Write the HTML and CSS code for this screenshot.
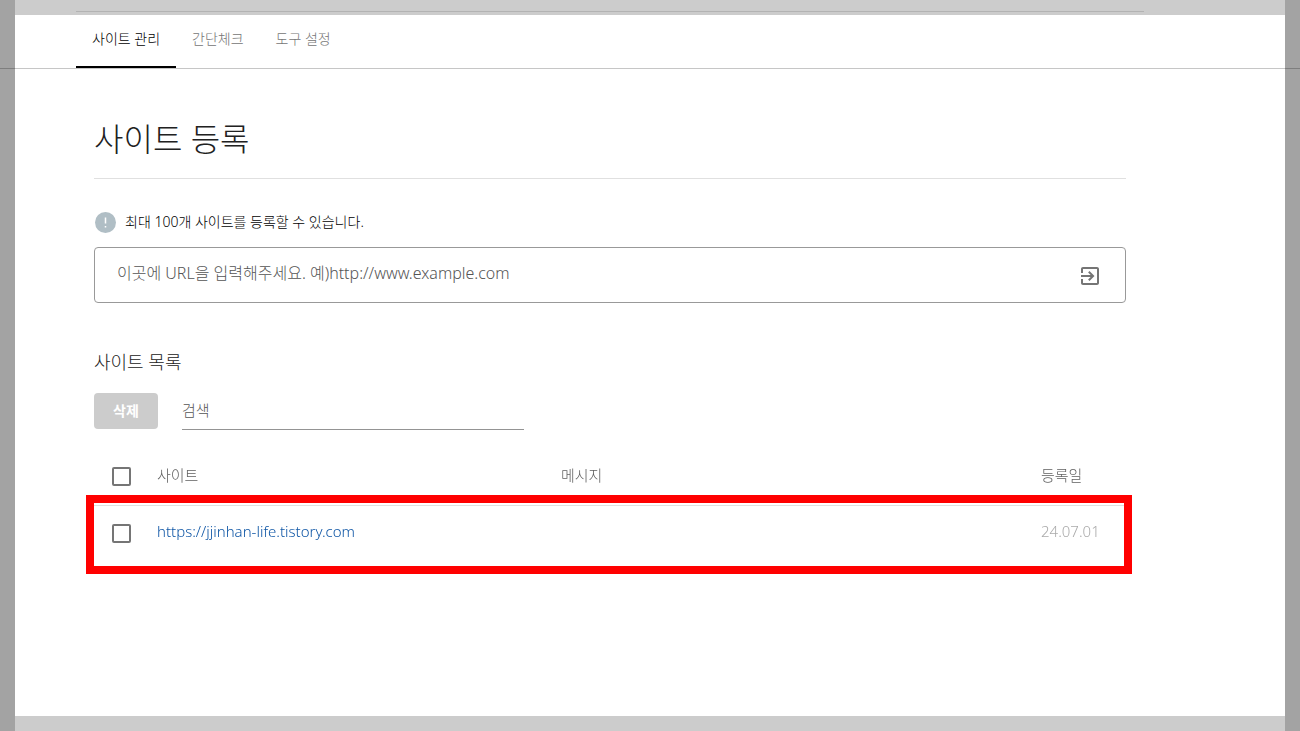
FILE: index.html
```html
<!DOCTYPE html>
<html lang="ko">
<head>
    <meta charset="UTF-8">
    <meta name="viewport" content="width=device-width, initial-scale=1.0">
    <title>사이트 관리</title>
    <link rel="stylesheet" href="styles.css">
</head>
<body>
    <header>
        <div class="topLine"></div>
        <nav class="tabs">
            <a href="#sites" class="tab active">사이트 관리</a>
            <a href="#check" class="tab">간단체크</a>
            <a href="#tools" class="tab">도구 설정</a>
        </nav>
    </header>

    <main id="sites">
        <h1>사이트 등록</h1>

        <form id="addForm">
            <label class="notice" for="url">
                <svg width="22" height="22" viewBox="0 0 22 22" aria-hidden="true">
                    <circle cx="11.5" cy="11.5" r="10.5" fill="#b0bec5"/>
                    <path d="M11.5 6.5v6M11.5 15v1.5" stroke="white" stroke-width="1.5"/>
                </svg>
                <span>최대 100개 사이트를 등록할 수 있습니다.</span>
            </label>
            <div class="urlBox">
                <input type="text" id="url" placeholder="이곳에 URL을 입력해주세요. 예)http://www.example.com">
                <button type="submit" class="enter" aria-label="등록">
                    <svg width="24" height="24" viewBox="0 0 24 24" aria-hidden="true">
                        <path fill="#757575" d="M10.09 15.59L11.5 17l5-5-5-5-1.41 1.41L12.67 11H3v2h9.67l-2.58 2.59zM19 3H5c-1.11 0-2 .9-2 2v4h2V5h14v14H5v-4H3v4c0 1.1.89 2 2 2h14c1.1 0 2-.9 2-2V5c0-1.1-.9-2-2-2z"/>
                    </svg>
                </button>
            </div>
        </form>

        <h2>사이트 목록</h2>
        <div class="toolbar">
            <button type="button" class="delete" disabled>삭제</button>
            <input type="text" class="search" placeholder="검색" aria-label="검색">
        </div>

        <div class="siteList">
            <table>
                <thead>
                    <tr>
                        <th class="check"><input type="checkbox" aria-label="전체 선택"></th>
                        <th class="site">사이트</th>
                        <th>메시지</th>
                        <th class="date">등록일</th>
                    </tr>
                </thead>
                <tbody>
                    <tr>
                        <td class="check"><input type="checkbox" aria-label="https://jjinhan-life.tistory.com 선택"></td>
                        <td class="site"><a href="#jjinhan">https://jjinhan-life.tistory.com</a></td>
                        <td></td>
                        <td class="date">24.07.01</td>
                    </tr>
                </tbody>
            </table>
            <div class="mark"></div>
        </div>
    </main>
</body>
</html>
```
FILE: styles.css
```css
*{
    box-sizing: border-box;
}
body{
    margin: 0;
    min-height: 100vh;
    background-color: white;
    font-family: "Noto Sans", "Noto Sans CJK KR", sans-serif;
    font-weight: 300;
    font-size: 15px;
    line-height: 20px;
    color: #212121;
}
/* shaded edges of the window */
body::before{
    content: "";
    position: fixed;
    inset: 0;
    border: solid rgba(0, 0, 0, 0.36);
    border-width: 0 15px;
    pointer-events: none;
}
body::after{
    content: "";
    position: fixed;
    inset: 0 15px;
    border: solid rgba(0, 0, 0, 0.2);
    border-width: 15px 0;
    pointer-events: none;
}
input, button{
    font-family: inherit;
    font-weight: inherit;
}
header{
    padding: 11px 156px 0 76px;
    border-bottom: 1px solid #c6c6c6;
}
.topLine{
    border-top: 1px solid #e0e0e0;
}
.tabs{
    display: flex;
}
.tab{
    height: 56px;
    padding: 17px 16px 0;
    font-size: 14px;
    color: #757575;
    text-decoration: none;
}
.tab.active{
    color: black;
    border-bottom: 2px solid black;
}
main{
    margin: 0 174px 0 94px;
    padding: 46px 0 40px;
}
h1{
    margin: 0 0 32px;
    padding-bottom: 15px;
    border-bottom: 1px solid #e0e0e0;
    font-size: 32px;
    line-height: 48px;
    font-weight: 300;
}
.notice{
    display: flex;
    align-items: center;
    gap: 9px;
    margin-bottom: 14px;
    font-size: 14px;
    color: black;
}
.urlBox{
    display: flex;
    align-items: center;
    height: 56px;
    padding: 0 23px 0 22px;
    border: 1px solid #999;
    border-radius: 4px;
}
.urlBox input{
    flex: 1;
    padding: 0 0 4px;
    border: 0;
    outline: 0;
    font-size: 16px;
}
input::placeholder{
    color: #555;
}
.enter{
    display: flex;
    padding: 2px 0 0;
    border: 0;
    background: none;
}
h2{
    margin: 47px 0 19px;
    font-size: 18px;
    line-height: 24px;
    font-weight: 300;
}
.toolbar{
    display: flex;
    gap: 24px;
}
.delete{
    width: 64px;
    height: 36px;
    padding: 0 0 2px;
    border: 0;
    border-radius: 4px;
    background-color: #ccc;
    color: white;
    font-size: 14px;
    font-weight: bold;
}
.search{
    width: 342px;
    height: 37px;
    padding: 0 0 3px;
    border: 0;
    border-bottom: 1px solid #949494;
    outline: 0;
    font-size: 15px;
}
.siteList{
    position: relative;
    margin-top: 19px;
}
table{
    width: 100%;
    border-collapse: collapse;
    table-layout: fixed;
    color: #616161;
}
th, td{
    height: 56px;
    padding: 0 0 4px;
    text-align: left;
    font-weight: 300;
}
td{
    height: 61px;
    padding-bottom: 9px;
    border-top: 1px solid #e0e0e0;
    border-bottom: 1px solid #e0e0e0;
}
.check{
    width: 63px;
    padding-left: 18px;
}
th.check{
    padding-bottom: 0;
}
td.check{
    padding-bottom: 4px;
}
.site{
    width: 404px;
}
.date{
    width: 85px;
}
td.date{
    color: #aaa;
}
td a{
    color: #0d55a5;
    text-decoration: none;
}
input[type="checkbox"]{
    appearance: none;
    display: block;
    width: 19px;
    height: 19px;
    margin: 0;
    border: 2px solid #757575;
    border-radius: 2px;
}
/* red frame round the registered site */
.mark{
    position: absolute;
    right: -6px;
    bottom: -7px;
    left: -8px;
    height: 79px;
    border: 8px solid red;
    pointer-events: none;
}
```
